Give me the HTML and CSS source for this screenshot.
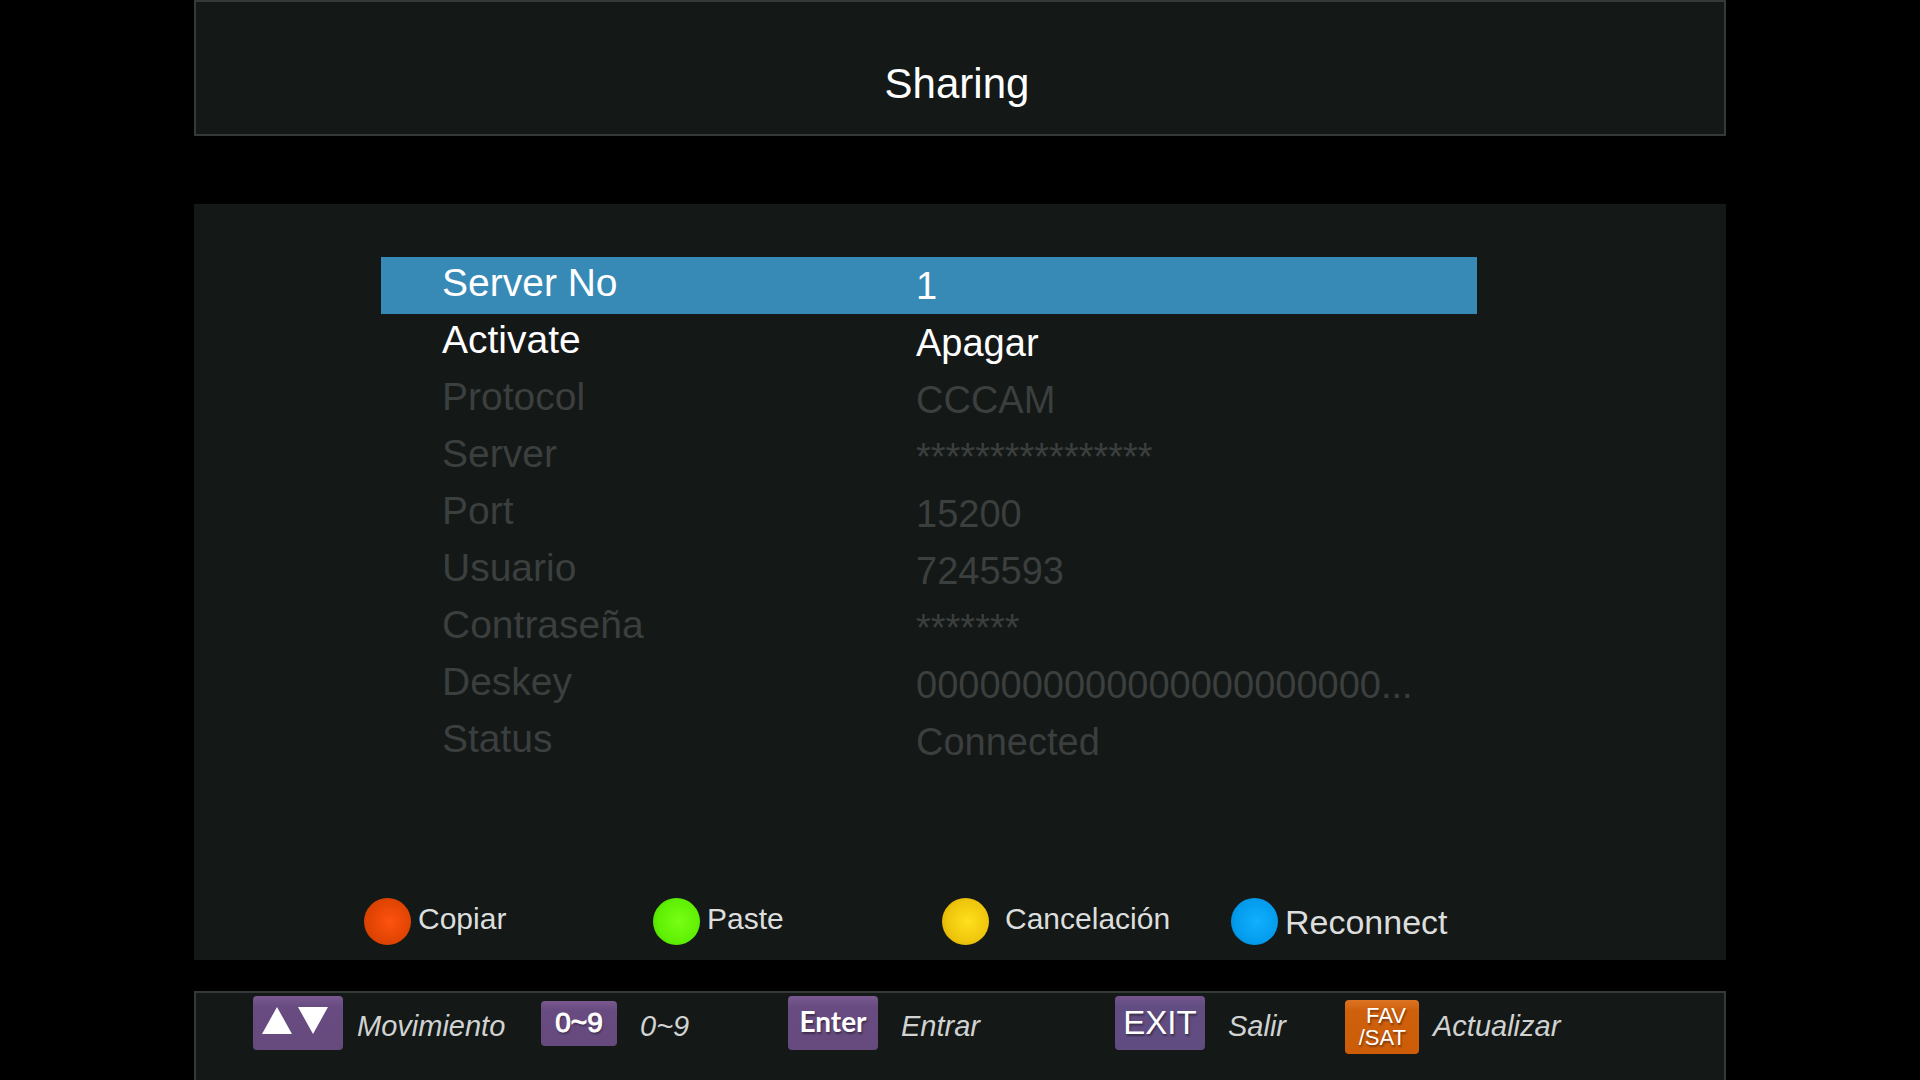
FILE: index.html
```html
<!DOCTYPE html>
<html lang="es">
<head>
    <meta charset="UTF-8">
    <meta name="viewport" content="width=device-width, initial-scale=1.0">
    <title>Sharing</title>
    <link rel="stylesheet" href="styles.css">
</head>
<body>
    <div class="screen">
        <header class="header">
            <h1>Sharing</h1>
        </header>

        <main class="panel">
            <table class="settings">
                <tr class="selected">
                    <th scope="row">Server No</th>
                    <td>1</td>
                </tr>
                <tr>
                    <th scope="row">Activate</th>
                    <td>Apagar</td>
                </tr>
                <tr class="disabled">
                    <th scope="row">Protocol</th>
                    <td>CCCAM</td>
                </tr>
                <tr class="disabled">
                    <th scope="row">Server</th>
                    <td>****************</td>
                </tr>
                <tr class="disabled">
                    <th scope="row">Port</th>
                    <td>15200</td>
                </tr>
                <tr class="disabled">
                    <th scope="row">Usuario</th>
                    <td>7245593</td>
                </tr>
                <tr class="disabled">
                    <th scope="row">Contraseña</th>
                    <td>*******</td>
                </tr>
                <tr class="disabled">
                    <th scope="row">Deskey</th>
                    <td>0000000000000000000000...</td>
                </tr>
                <tr class="disabled">
                    <th scope="row">Status</th>
                    <td>Connected</td>
                </tr>
            </table>

            <div class="actions">
                <button type="button" class="action"><span class="dot red"></span><span class="action-text">Copiar</span></button>
                <button type="button" class="action"><span class="dot green"></span><span class="action-text">Paste</span></button>
                <button type="button" class="action wide"><span class="dot yellow"></span><span class="action-text">Cancelación</span></button>
                <button type="button" class="action"><span class="dot blue"></span><span class="action-text large">Reconnect</span></button>
            </div>
        </main>

        <footer class="footer">
            <div class="hint">
                <kbd class="key key-arrows">
                    <svg width="66" height="28" viewBox="0 0 66 28" aria-hidden="true">
                        <path d="M15 0 L30 27 H0 Z M36 0 H66 L51 27 Z" fill="#fff"/>
                    </svg>
                </kbd>
                <span class="hint-text">Movimiento</span>
            </div>
            <div class="hint spaced">
                <kbd class="key key-small">0~9</kbd>
                <span class="hint-text">0~9</span>
            </div>
            <div class="hint spaced">
                <kbd class="key key-enter">Enter</kbd>
                <span class="hint-text">Entrar</span>
            </div>
            <div class="hint spaced">
                <kbd class="key key-exit">EXIT</kbd>
                <span class="hint-text">Salir</span>
            </div>
            <div class="hint">
                <kbd class="key key-fav">FAV<br>/SAT</kbd>
                <span class="hint-text">Actualizar</span>
            </div>
        </footer>
    </div>
</body>
</html>
```

FILE: styles.css
```css
* {
    margin: 0;
    padding: 0;
    box-sizing: border-box;
}

body {
    font-family: "Liberation Sans", Arial, sans-serif;
    background: #000;
    color: #fff;
}

.screen {
    display: flex;
    flex-direction: column;
    min-height: 100vh;
    padding: 0 194px;
}

.header {
    background: #141817;
    border: 2px solid #343a39;
    padding: 57px 6px 25px 0;
    text-align: center;
}

.header h1 {
    font-size: 42px;
    font-weight: 400;
    line-height: 50px;
}

.panel {
    background: #141817;
    margin-top: 68px;
    padding: 53px 170px 15px;
}

/* Settings list */
.settings {
    width: calc(100% - 96px);
    margin-left: 17px;
    border-spacing: 0;
    table-layout: fixed;
}

.settings th {
    width: 535px;
    padding: 0 0 6px 61px;
    font-size: 39px;
    font-weight: 400;
    line-height: 51px;
    text-align: left;
    vertical-align: top;
}

.settings td {
    padding-top: 2px;
    font-size: 38px;
    line-height: 55px;
    vertical-align: top;
    white-space: nowrap;
}

.selected {
    background: #388ab6;
}

.disabled {
    color: #3b3f3e;
}

/* Colour buttons */
.actions {
    display: grid;
    grid-template-columns: repeat(4, 1fr);
    gap: 0 16px;
    margin-top: 128px;
    margin-right: 52px;
}

.action {
    display: flex;
    align-items: center;
    gap: 7px;
    background: none;
    border: none;
    color: #dcdedd;
    font-family: inherit;
    font-size: 30px;
    line-height: 40px;
    cursor: pointer;
}

.action.wide {
    gap: 16px;
}

.action-text {
    padding-bottom: 6px;
}

.action-text.large {
    padding-bottom: 0;
    font-size: 34px;
}

.dot {
    flex: none;
    width: 47px;
    height: 47px;
    border-radius: 50%;
}

.red {
    background: radial-gradient(circle at 55% 50%, #ff5210, #e04402 60%, #c83a00);
}

.green {
    background: radial-gradient(circle at 55% 50%, #78ff14, #5ff004 60%, #46c800);
}

.yellow {
    background: radial-gradient(circle at 55% 50%, #ffe11c, #eec50c 60%, #cc9c00);
}

.blue {
    background: radial-gradient(circle at 55% 50%, #12b0ff, #049ced 60%, #0080c8);
}

/* Key legend */
.footer {
    flex: 1;
    display: grid;
    grid-template-columns: 288fr 247fr 327fr 230fr 379fr;
    align-items: start;
    margin-top: 31px;
    padding: 3px 0 0 57px;
    background: #141817;
    border: 2px solid #343a39;
    border-bottom: none;
}

.hint {
    display: flex;
    align-items: center;
    gap: 14px;
    height: 54px;
}

.hint.spaced {
    gap: 23px;
}

.hint-text {
    padding-top: 6px;
    color: #d0d3d2;
    font-size: 29px;
    font-style: italic;
    line-height: 34px;
}

.key {
    display: flex;
    flex: none;
    align-items: center;
    justify-content: center;
    width: 90px;
    height: 54px;
    padding-bottom: 4px;
    border-radius: 4px;
    background: linear-gradient(#7a5a90, #684b80 20%, #664a7e);
    font-family: inherit;
    text-shadow: 1px 2px 2px rgba(0, 0, 0, 0.4);
}

.key-arrows {
    padding-right: 6px;
}

.key-small {
    width: 76px;
    height: 45px;
    padding-bottom: 0;
    font-size: 28px;
    -webkit-text-stroke: 1px #fff;
}

.key-enter {
    font-family: Lato, sans-serif;
    font-size: 28px;
    font-weight: 700;
}

.key-exit {
    padding-bottom: 0;
    background: linear-gradient(#74558c, #614d82 20%, #604c80);
    font-size: 33px;
}

.key-fav {
    justify-content: flex-end;
    width: 74px;
    margin-top: 8px;
    padding: 0 13px 0 0;
    background: linear-gradient(#dc7424, #cf600c 20%, #cc5c08);
    font-size: 22px;
    line-height: 22px;
    text-align: right;
}
```
